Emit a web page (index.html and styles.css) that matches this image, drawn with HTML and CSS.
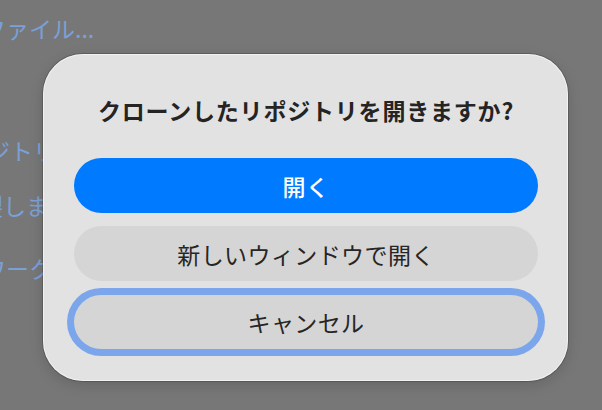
FILE: index.html
```html
<!DOCTYPE html>
<html lang="ja">
<head>
<meta charset="utf-8">
<link rel="stylesheet" href="styles.css">
</head>
<body>
<div class="backdrop">
  <div class="bg-line l1">ファイル...</div>
  <div class="bg-line l2">リポジトリを開く</div>
  <div class="bg-line l3">複製しました</div>
  <div class="bg-line l4">ワークツリー</div>
</div>
<div class="dialog">
  <div class="title">クローンしたリポジトリを開きますか?</div>
  <div class="buttons">
    <div class="btn primary">開く</div>
    <div class="btn">新しいウィンドウで開く</div>
    <div class="btn focused">キャンセル</div>
  </div>
</div>
</body>
</html>
```
FILE: styles.css
```css
html, body {
  margin: 0;
  padding: 0;
  width: 602px;
  height: 410px;
  overflow: hidden;
  background: #777777;
  font-family: "Noto Sans CJK JP", "Noto Sans", sans-serif;
}
.backdrop {
  display: flex;
  flex-direction: column;
  color: #7ba0d6;
  font-size: 23px;
  line-height: 30px;
}
.bg-line { white-space: nowrap; }
.l1 { margin-top: 13px; margin-left: -17px; }
.l2 { margin-top: 92px; margin-left: -59px; }
.l3 { margin-top: 25px; margin-left: -43px; }
.l4 { margin-top: 33px; margin-left: -17px; }
.dialog {
  position: absolute;
  left: 43px;
  top: 54px;
  width: 525px;
  height: 327px;
  box-sizing: border-box;
  border-radius: 40px;
  background: #e2e2e2;
  box-shadow: 0 0 0 1px rgba(0,0,0,0.18), inset 0 0 0 1px rgba(255,255,255,0.55), 0 4px 14px rgba(0,0,0,0.15);
  padding: 41px 30px 32px 31px;
  display: flex;
  flex-direction: column;
}
.title {
  height: 30px;
  line-height: 30px;
  text-align: center;
  font-size: 23px;
  font-weight: 700;
  color: #242424;
  letter-spacing: 0.8px;
  white-space: nowrap;
}
.buttons {
  margin-top: 33px;
  display: flex;
  flex-direction: column;
  gap: 13px;
}
.btn {
  height: 55px;
  border-radius: 28px;
  background: #d5d5d5;
  color: #262626;
  font-size: 23px;
  letter-spacing: 0.4px;
  display: flex;
  align-items: center;
  justify-content: center;
  white-space: nowrap;
}
.btn.primary {
  background: #007aff;
  color: #ffffff;
  font-weight: 500;
}
.btn.focused {
  height: 54px;
  margin-top: 1px;
  border-radius: 27px;
  box-shadow: 0 0 0 7px #7ba6ec;
}
```
